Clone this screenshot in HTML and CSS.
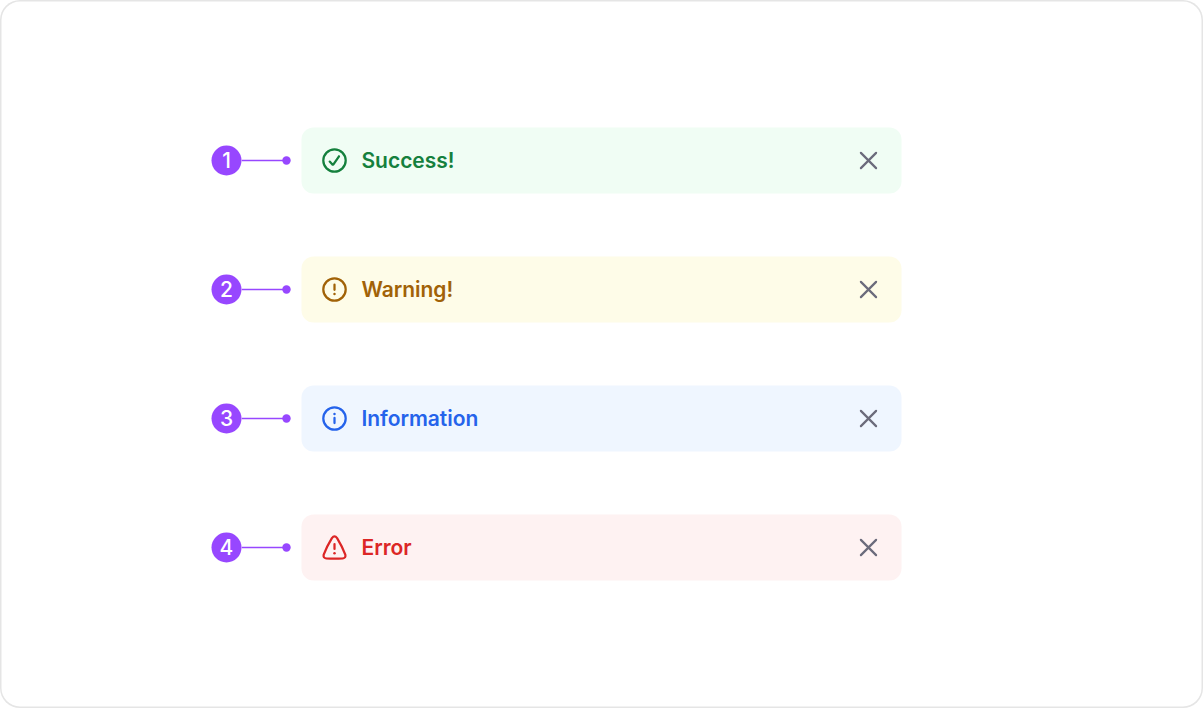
FILE: index.html
```html
<!DOCTYPE html>
<html lang="en">
<head>
<meta charset="utf-8">
<title>Alert variants</title>
<link rel="stylesheet" href="styles.css">
</head>
<body>
<main class="frame">
  <div class="row">
    <div class="marker"><span class="number">1</span><svg class="pointer" viewBox="0 0 50 10"><path d="M0 5H45"/><circle cx="45" cy="5" r="4.2"/></svg></div>
    <div class="alert success">
      <svg class="icon" viewBox="0 0 26 26"><circle cx="13" cy="13" r="11.2"/><path d="M8.2 14.1L10.7 16.8Q11.5 17.5 12.1 16.6L17.5 8.8"/></svg>
      <span class="label">Success!</span>
      <svg class="close" viewBox="0 0 20 20"><path d="M2.4 2.4L17.6 17.6M17.6 2.4L2.4 17.6"/></svg>
    </div>
  </div>
  <div class="row">
    <div class="marker"><span class="number">2</span><svg class="pointer" viewBox="0 0 50 10"><path d="M0 5H45"/><circle cx="45" cy="5" r="4.2"/></svg></div>
    <div class="alert warning">
      <svg class="icon" viewBox="0 0 26 26"><circle cx="13" cy="13" r="11.2"/><path d="M13 8.2V13.3"/><circle class="dot" cx="13" cy="17.4" r="1.25"/></svg>
      <span class="label">Warning!</span>
      <svg class="close" viewBox="0 0 20 20"><path d="M2.4 2.4L17.6 17.6M17.6 2.4L2.4 17.6"/></svg>
    </div>
  </div>
  <div class="row">
    <div class="marker"><span class="number">3</span><svg class="pointer" viewBox="0 0 50 10"><path d="M0 5H45"/><circle cx="45" cy="5" r="4.2"/></svg></div>
    <div class="alert info">
      <svg class="icon" viewBox="0 0 26 26"><circle cx="13" cy="13" r="11.2"/><path d="M13 12.4V17.5"/><circle class="dot" cx="13" cy="8.5" r="1.25"/></svg>
      <span class="label">Information</span>
      <svg class="close" viewBox="0 0 20 20"><path d="M2.4 2.4L17.6 17.6M17.6 2.4L2.4 17.6"/></svg>
    </div>
  </div>
  <div class="row">
    <div class="marker"><span class="number">4</span><svg class="pointer" viewBox="0 0 50 10"><path d="M0 5H45"/><circle cx="45" cy="5" r="4.2"/></svg></div>
    <div class="alert error">
      <svg class="icon" viewBox="0 0 26 26"><path d="M10.4 3.6Q13 .1 15.6 3.6Q20.4 11.4 23.8 20.1Q24.6 23.5 21.3 23.9Q13 24.3 4.7 23.9Q1.4 23.5 2.2 20.1Q5.6 11.4 10.4 3.6Z"/><path d="M13 9.6V14.4"/><circle class="dot" cx="13" cy="18.8" r="1.25"/></svg>
      <span class="label">Error</span>
      <svg class="close" viewBox="0 0 20 20"><path d="M2.4 2.4L17.6 17.6M17.6 2.4L2.4 17.6"/></svg>
    </div>
  </div>
</main>
</body>
</html>
```
FILE: styles.css
```css
* { box-sizing: border-box; }
body { margin: 0; background: #fff; font-family: Inter, "Liberation Sans", sans-serif; }
.frame {
  width: 1203px;
  height: 708px;
  padding: 127px 0 0 211px;
  box-shadow: inset 0 0 0 1.5px #e5e5e5;
  border-radius: 20px;
  display: flex;
  flex-direction: column;
  gap: 63px;
}
.row { display: flex; align-items: center; gap: 10px; height: 66px; transform: translate(.5px, .5px); }
.marker { display: flex; align-items: center; width: 80px; }
.number {
  width: 30px;
  height: 30px;
  border-radius: 50%;
  background: #9747ff;
  color: #fff;
  font-size: 21px;
  font-weight: 500;
  line-height: 30px;
  text-align: center;
}
.pointer { width: 50px; height: 10px; fill: #9747ff; }
.pointer path { stroke: #9747ff; stroke-width: 1.5; }
.alert {
  width: 600px;
  height: 66px;
  border-radius: 12px;
  padding: 0 23px 0 20px;
  display: flex;
  align-items: center;
}
.icon { width: 26px; height: 26px; fill: none; stroke: currentColor; stroke-width: 2.25; stroke-linecap: round; stroke-linejoin: round; }
.icon .dot { fill: currentColor; stroke: none; }
.label { margin-left: 14px; font-size: 21px; font-weight: 600; line-height: 30px; letter-spacing: -.04px; }
.close { width: 20px; height: 20px; margin-left: auto; stroke: #6b6b7b; stroke-width: 2.2; stroke-linecap: round; }
.success { background: #f0fdf4; color: #15803d; }
.warning { background: #fefce8; color: #a16207; }
.info { background: #eff6ff; color: #2563eb; }
.error { background: #fef2f2; color: #dc2626; }
```
